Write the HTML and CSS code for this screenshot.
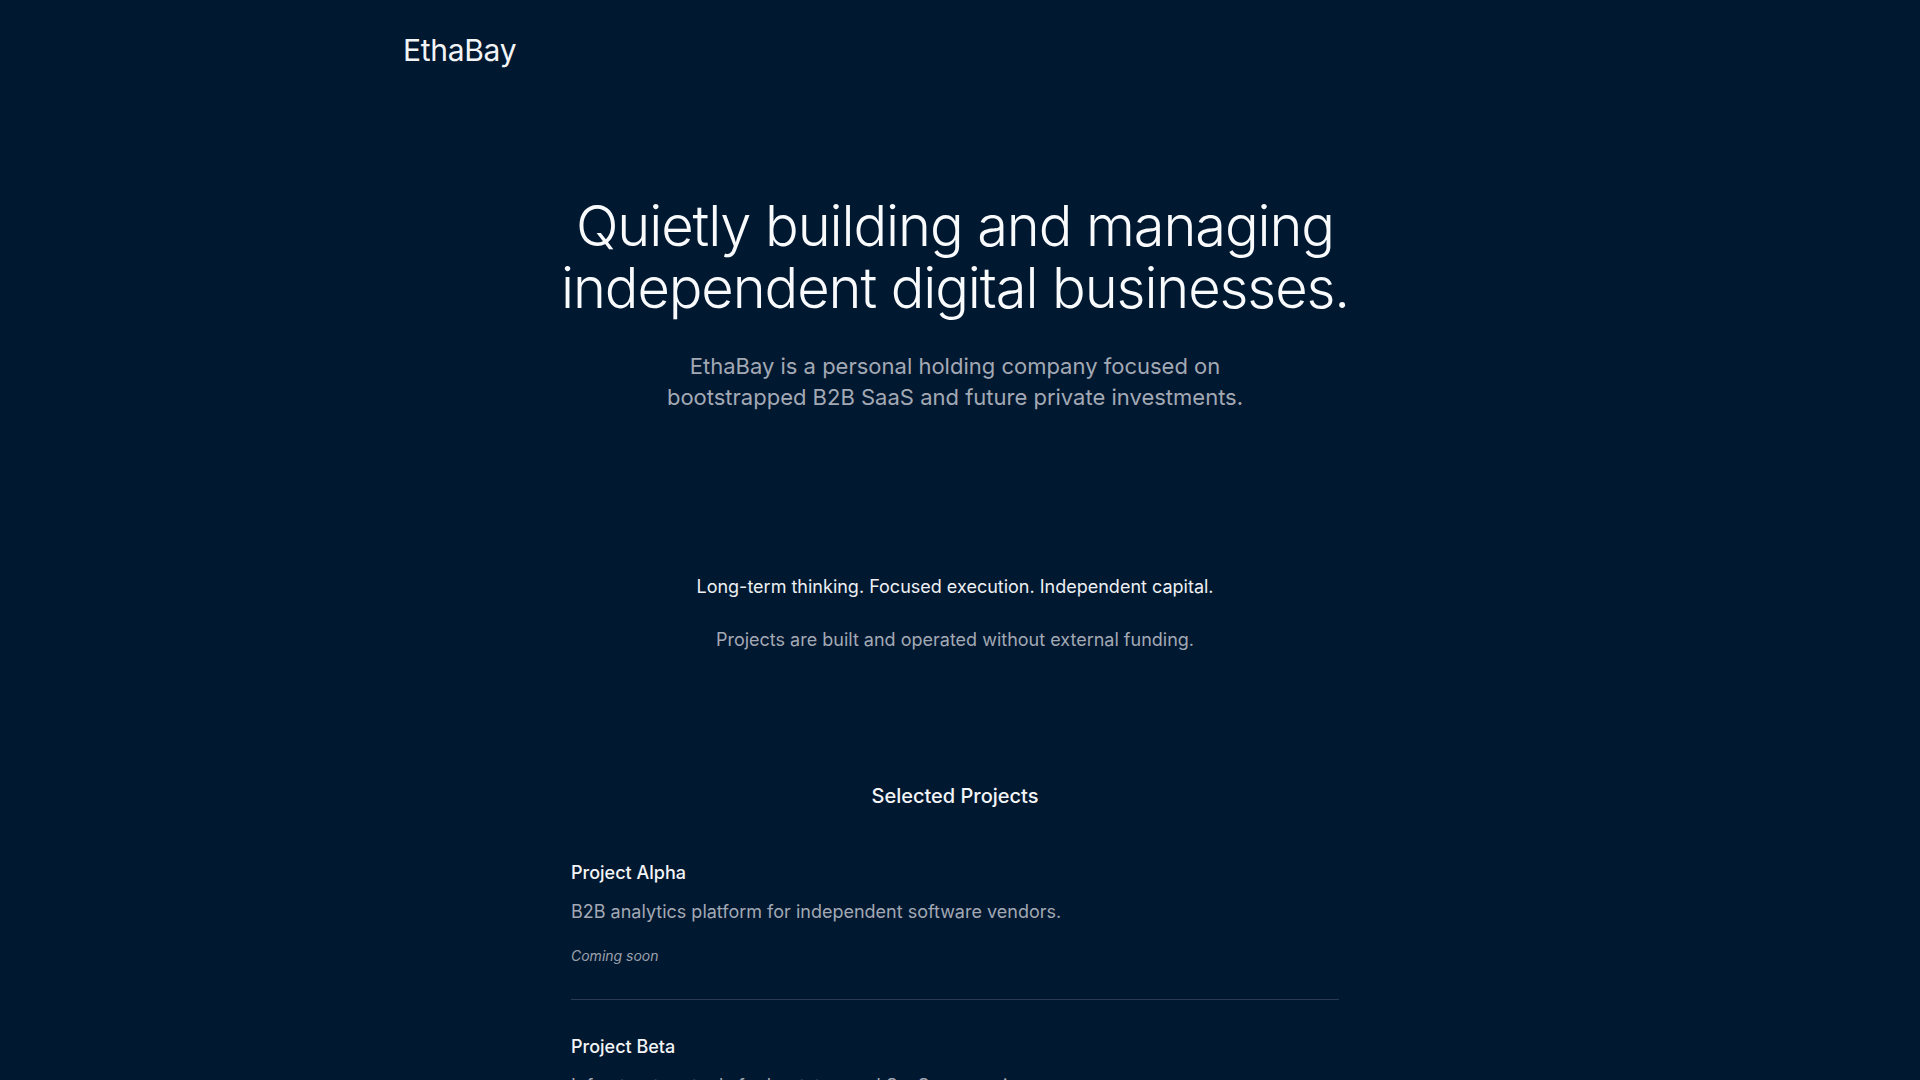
FILE: index.html
```html
<!DOCTYPE html>
<html lang="en">
<head>
<meta charset="utf-8">
<title>EthaBay</title>
<link rel="stylesheet" href="styles.css">
</head>
<body>
<header class="site-header">
  <div class="container">
    <a class="logo" href="#">EthaBay</a>
  </div>
</header>
<main>
  <section class="hero">
    <h1 class="hero-title">Quietly building and managing<br>independent digital businesses.</h1>
    <p class="hero-text">EthaBay is a personal holding company focused on<br>bootstrapped B2B SaaS and future private investments.</p>
  </section>
  <section class="philosophy">
    <p class="philosophy-lead">Long-term thinking. Focused execution. Independent capital.</p>
    <p class="philosophy-sub">Projects are built and operated without external funding.</p>
  </section>
  <section class="projects">
    <h2 class="projects-title">Selected Projects</h2>
    <ul class="project-list">
      <li class="project">
        <h3 class="project-name">Project Alpha</h3>
        <p class="project-desc">B2B analytics platform for independent software vendors.</p>
        <p class="project-status">Coming soon</p>
      </li>
      <li class="project">
        <h3 class="project-name">Project Beta</h3>
        <p class="project-desc">Infrastructure tools for bootstrapped SaaS companies.</p>
        <p class="project-status">In development</p>
      </li>
    </ul>
  </section>
</main>
</body>
</html>
```
FILE: styles.css
```css
* { box-sizing: border-box; }
html, body { margin: 0; padding: 0; }
body {
  background: #011831;
  color: #f1f5f9;
  font-family: Inter, "Noto Sans", "Liberation Sans", sans-serif;
  -webkit-font-smoothing: antialiased;
  padding-right: 10px;
}
h1, h2, h3, p, ul { margin: 0; padding: 0; }
ul { list-style: none; }

.container {
  max-width: 1152px;
  margin: 0 auto;
  padding: 0 24px;
}
.site-header { padding-top: 30px; }
.logo {
  display: inline-block;
  color: #f3f4f6;
  text-decoration: none;
  font-size: 30px;
  line-height: 40px;
  font-weight: 400;
  letter-spacing: -0.3px;
}

.hero {
  text-align: center;
  padding-top: 125px;
}
.hero-title {
  font-size: 56px;
  line-height: 62px;
  font-weight: 300;
  color: #f8fafc;
  letter-spacing: -1.1px;
}
.hero-text {
  margin-top: 32px;
  font-size: 22px;
  line-height: 31px;
  color: #a3a9b4;
}

.philosophy {
  text-align: center;
  padding-top: 160px;
}
.philosophy-lead {
  font-size: 18px;
  line-height: 28px;
  color: #eef0f3;
}
.philosophy-sub {
  margin-top: 25px;
  font-size: 18px;
  line-height: 28px;
  color: #a3a9b4;
}

.projects {
  max-width: 768px;
  margin: 0 auto;
  padding-top: 128px;
}
.projects-title {
  text-align: center;
  font-size: 20px;
  line-height: 28px;
  font-weight: 500;
  color: #f3f4f6;
  margin-bottom: 16px;
}
.project {
  padding: 33px 0;
  border-bottom: 1px solid #2a3a54;
}
.project-name {
  font-size: 18px;
  line-height: 28px;
  font-weight: 500;
  color: #f3f4f6;
}
.project-desc {
  margin-top: 11px;
  font-size: 18px;
  line-height: 28px;
  color: #a3a9b4;
}
.project-status {
  margin-top: 20px;
  font-size: 14px;
  line-height: 20px;
  font-style: italic;
  color: #9aa1ad;
}
```
